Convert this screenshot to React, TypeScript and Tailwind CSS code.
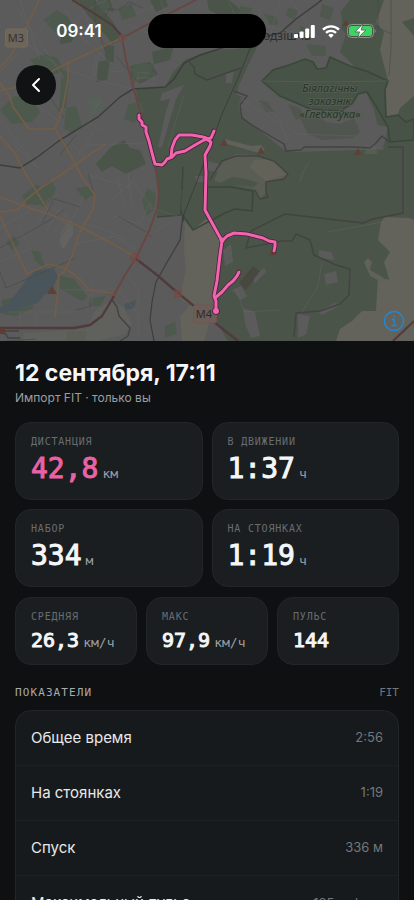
import clsx from 'clsx'

type Stat = {
  label: string
  value: string
  unit?: string
  accent?: boolean
}

const mainStats: Stat[] = [
  { label: 'Дистанция', value: '42,8', unit: 'км', accent: true },
  { label: 'В движении', value: '1:37', unit: 'ч' },
  { label: 'Набор', value: '334', unit: 'м' },
  { label: 'На стоянках', value: '1:19', unit: 'ч' },
]

const smallStats: Stat[] = [
  { label: 'Средняя', value: '26,3', unit: 'км/ч' },
  { label: 'Макс', value: '97,9', unit: 'км/ч' },
  { label: 'Пульс', value: '144' },
]

const metrics = [
  { name: 'Общее время', value: '2:56' },
  { name: 'На стоянках', value: '1:19' },
  { name: 'Спуск', value: '336 м' },
  { name: 'Максимальный пульс', value: '185 уд/мин' },
]

const mono = "font-['DejaVu_Sans_Mono',monospace]"

// track pieces, drawn twice: dark casing first, then the pink line
const track = [
  'M139 115l0 4 3 3 0 3 4 2 0 5 3 9 3 12 3 11 7 1 3-3 2-3 5-2 4-4 9-2 5-3 5-3 9-5 5-1',
  'M171 157l1-9 3-8 4-5 13 0 11 2 6 2',
  'M214 131l-3 7-5 1 5 3-1 4-5 9 1 18-1 37 17 31',
  'M222 241l5-5 7-3 13 1 8 2 8 2 6 3 6 1 0 4-1 5',
  'M222 241l-2 14-3 26-3 15 2 5 0 4 0 6',
  'M215 298l7-6 6-7 5-4 4-5 2-4',
]

function RouteMap() {
  return (
    <svg
      viewBox="0 0 414 341"
      preserveAspectRatio="xMidYMid slice"
      className="block h-full w-full"
      role="img"
      aria-label="Карта маршрута"
    >
      <rect width="414" height="341" fill="#5b5b5b" />

      {/* forests */}
      <g fill="#4a5448">
        <path d="M136 89l29-2 9-16 12-12 30-9 30-2 20-16 4 20-8 18-22 14-4 10 8 4-4 8 4 12 40 32 10 2 66-2 54-1V341H228l-12-20-1-20 7-60-16-22-13 11-12-16-24 3 2-20-5-32-14-50z" />
        <path d="M334 20l16-20h64v150h-30l-10-40-20-44-14-14 6-18z" />
        <path d="M75 0h20l18 22 8 14-8 8-12-14zM98 62l12-2-3 20-10 2zM104 44l10 2 0 16-8 0zM130 66l20-4 8 12-18 10-8-6zM152 52l22-6-4 14-16 4z" />
        <path d="M207 0h22l12 10-6 10-14-4-12-6zM150 0h16l2 6-12 6z" />
        <path d="M110 148l14-8 6 8 10 2 6 14-20 10-14-8-10 6-6-8zM100 0l10 0 4 12-8-2z" />
        <path d="M67 331h20l-2 10H66zM62 28l14 2-4 12-12 2z" />
      </g>
      <g fill="#4e594e">
        <path d="M0 110l14-14 16 2 10 14-8 10-20 2zM22 196l14-12 12 8-2 14-20-2zM43 20l14-10 12 8 6 14-18 2zM30 60l14-6 14 4 6 14-18 4zM62 70l8 2-4 36-7 2zM128 105l12-4 4 10-10 12-10-4zM134 64l20 0-6 14-16 4z" />
        <path d="M66 108l10-2 6 20-10 8-8-6zM2 300l24-6 8 14-18 8-14-2zM58 275l16 4 14 18-6 4-22-12zM90 298l16-2-6 10-12 0zM75 188l14-2 6 8-10 6zM148 188l8 6-2 16-8 6-4-16zM98 0h8l6 8-10 4zM165 326l10-4 2 12-12 4zM6 242l8-6 6 8-8 6zM30 250l10 2 6 18-10-8zM118 8l14-4 4 12-14 4zM34 194l16-14 6 8-4 12-14 4z" />
      </g>

      {/* fields and bare land */}
      <g fill="#63635c">
        <path d="M185 222l8 8 13-11 16 22-6 58-2 8-10 34h-22l-2-24 10-12-10-6 6-32-2-16z" />
        <path d="M384 0h30v18l-12 4 12 14v60l-14 12-4 12-10-2-1-34 3-4-8-30 4-18-8-10z" />
        <path d="M381 222l4-5 25 1 4 2v63l-24-1-6-20 6-10-12-12zM378 278l14 2 22 0v61h-78l4-12 12-8 10-10 14 0z" />
        <path d="M96 310l16-10 12 8 8 16-8 10-24 7H22l2-8 62-4z" fillOpacity=".7" />
        <path d="M59 234l8-12 6 4-4 12-6 2zM366 146l10-4 1 12-12 0z" fillOpacity=".6" />
      </g>

      {/* settlement between the reserve and the southern forest */}
      <path d="M240 8l20-8h78l4 20-2 26-10 12-4 9-9 1-4-7-12-2-20 5-12 7-7 10 18 15 28 12 32 5 20-2 8 12 20 4-4 18-20 2h-60l-14 4-48-34-4-12 8-12-8-6 16-34 10-20z" fill="#5b5b5b" />
      <path d="M300 118l16-4 10 8 14 2 14-6 6 14-6 6-32 2-14-6zM288 104l12 4 6 8-10 4zM258 100l10 2 6 10-8 0z" fill="#4a5448" fillOpacity=".6" />
      <path d="M264 14l12 3 2 8-8 0zM288 8l10 2-4 10-8-4zM240 6l12 2-2 6-10 0zM300 26l12 4-4 8-8-2zM322 4l12 4-4 12-10-4zM306 44l20 2 0 10-14 0z" fill="#4e584c" />
      <path d="M216 176l6-14 14-8 20 1 18 5 14 14-4 5-18 4 0 10-6 6-6-10-40-8z" fill="#5a5d54" />
      <path d="M254 160l16-1 10 8 6 8-20 6-8-6-8-8z" fill="#626258" />
      <path d="M222 182l10-5 14 2 12 4-4 4-30-3z" fill="#4a5448" />
      <g fill="#5b5b5b">
        <path d="M226 73l8-2-2 12-6 0zM184 85l-8 14-14 48-4 0 8-36 4-12-10 2 2-8zM319 250l12 2 4 8-16-2zM324 274l12-3 2 11-12 3zM223 250l8-6 2 18-8 4zM232 290l9-4 6 10-6 4zM243 308l12 4 5 24-9 2-6-14zM298 314l12 2-4 18-8 4zM254 276l10-8 2 4-12 12zM318 311l17-8 6 2-19 10zM195 176l9 0 0 6-8 0zM204 160l16 4 0 8-14-2z" />
        <path d="M225 139l26 7 10-1 4 5-6 3-32-9zM364 262l4-4 4 4-2 8 14 8-2 4-12-6z" fill="#61615b" />
      </g>
      <path d="M239 283l14-17 7 5-14 19z" fill="#494840" />

      {/* water */}
      <path d="M8 304l20-26 8-8 18-1 4 8-6 12-8 6-6 8-14 4-8 4-12 2zM124 304l12-4-2 8-8 2zM0 307l12-4 4 8-16 2z" fill="#4a555b" />
      <path d="M86 102l6-5 10 2 2 8-6 8-10-2z" fill="#566058" />
      <path d="M59 240l10-14 4-2 0 10-10 16z" fill="#646161" />

      {/* reserve */}
      <path
        d="M262 81l11-11 16-5 16-6 8 3 4 7 9-1 4-11 20 9 16 5 22 10-3 9 1 27 12-2 8 7 8-3v21l-24 2-2-15-12-21-9-14-9 2-6 10-12 7-30-2-30-13z"
        fill="#475346"
        stroke="#3a473a"
        strokeWidth="1.6"
      />
      <path d="M262 81l60 1 66-1" fill="none" stroke="#555f53" strokeWidth=".8" />
      <path d="M183 167l-2 46 12 17 32-17 10-4 17 2 1-20-22-4-24 0" fill="none" stroke="#3b473b" strokeWidth="1.5" />

      {/* district and forest borders */}
      <g fill="none" stroke="#444343" strokeWidth="1.4" strokeLinejoin="round">
        <path d="M234 91l13 5-7 9 2 13 10 7 20 12 12 7 2 7 15-1 3-3 50 0 16 1 5-4 7-8 7 6" />
        <path d="M388 147h15l0 66-30 6-10 4-78-9-34 17-5 17 36-7 10 0 4-7 14 6 4 15 22 10 14 4-1 26-9 9-20 7-24 2-2 24" />
        <path d="M210 180l6-10 6-9 14-5 22 0 16 5 14 13-4 5-18 3 0 10 2 5-8 2-5-9" />
        <path d="M189 62l5 5 1 7 12 6 34-12M157 217l24-2M112 300l5 7 2 9 11 12-2 8-8 5M5 331h14M0 333l6 1 2 4 12 0" />
      </g>

      {/* minor streets */}
      <g fill="none" stroke="#696969" strokeWidth=".7" opacity=".6">
        <path d="M0 25l60 42M0 72l50-52M18 10l46 68M80 36l34 30M20 0l20 60M56 40l34-32 16-8M65 10l22 34M78 0l20 44M132 5l26 28 40-10M128 24l30 14M136 14l18-8M160 0l14 30M190 0l-20 24 10 20" />
        <path d="M68 70l30 10 34 9M95 55l-2 22M99 52l-4 24M30 100l30 22M62 132l24 28M0 120l40 50M12 142l26 26M45 150l26-22M95 130l-20 30M85 145l60-2M100 100l-12 22 14 10M110 72l24-2M138 72l16 2 0 10-16 0zM136 78l20 0" />
        <path d="M88 175l40 12 8-12M110 200l24-18 18 26M115 216l24 8 12-22M118 178l6 28M128 172l4 36M40 208l30 18M46 204l24 14M54 200l-18 26M62 206l-16 24M68 212l-16 22M84 195l-22 44M0 228l58-34M0 262l32-14M20 228l14 30M8 312h68M20 312v14M36 312v14M60 290h44M92 284v26M88 312l0-16 24-8M124 272l14 16 0 48M118 290l22 26M76 244l40-8 20 14M82 222l44 16M150 208l28 8M150 236l20-14M340 24h46M240 20l70 16M262 6l-10 40M280 0l-10 36M228 0l14 32M290 0l30 40M240 98l40 26 10 22M252 96l44 38 60 2" />
        <path d="M184 95l-16 52M182 190v20M322 262l-4 24-16 26M236 288l8 24 36-2M328 232l54-10M300 182l3-10 6-10" />
      </g>
      <g fill="none" stroke="#484848" strokeWidth=".8" opacity=".8">
        <path d="M116 56l20 24M40 82l24 36M0 248l50-28 14-10M88 174l6 20M118 216l28 16M0 272l6 16 70-30M6 341l30-2M95 0v20l10 30M60 155l16-20M105 18l4-10 10 2 10-8 14 6M92 306l-16 4M42 223l12-24 26 8M220 14l34 30M378 0v28l14 6M391 0v50l-2 26" />
      </g>

      {/* railways */}
      <g fill="none" stroke="#3c3e3c" strokeWidth="1.5">
        <path d="M0 165l20 3 16-10 24-18 38-23 22-20 13-8 32-2 9-8 10-16 16-8 38-12 42-10 16-14 22-16 15-13" />
        <path d="M251 46l-12 30-17 38-16 44-22 56-1 8" strokeWidth="1" />
        <path d="M183 214l-3 26-14 24-10 18-4 20-2 18 4 21" strokeWidth="1.2" />
      </g>

      {/* city roads */}
      <g fill="none" stroke="#735d46" strokeWidth="1.6" strokeLinejoin="round">
        <path d="M39 0l-12 26-15 28-12 14M0 90l20-3 30-15 18-9 53-25M68 63v16l-5 28-8 22-26 0-16-22-3-10-10-14M0 136l14 16 14 26 20 32M55 129l12 20 15 28 13 18-2 14-14 25-6 20-9 18-5 3-4 42" />
        <path d="M0 197l32 12 16 5 22 8 30 15 34 19M0 212l18-2 8-10 12-10 30-20 22-16 16-10M0 216l14 30 13 28 22-10 16 4 16 12 8 10 24 3" />
      </g>
      <g fill="none" stroke="#6a4441" strokeLinejoin="round">
        <path d="M122 38l30-16 28-14 16-8M122 38l4 22 8 30 8 28 10 40 5 16 2 20-2 15-8 22-13 27-11 17-11 20" strokeWidth="1.8" />
        <path d="M72 0l20 12 20 13 10 11" stroke="#523a3a" strokeWidth="2" />
        <path d="M0 328h74l16-3 12-9 12-20M135 258l22 17 22 19 20 16M214 322l24 19" stroke="#513a3c" strokeWidth="2.4" />
        <path d="M393 341l21-20" stroke="#553b3f" strokeWidth="2.2" />
      </g>
      <g fill="none" stroke="#754a45" strokeWidth="1.3">
        <circle cx="122" cy="38" r="3" />
        <circle cx="135" cy="258" r="4" />
        <path d="M130 258h10M135 253v10M174 290l8 8M182 290l-8 8M147 235l5 1M111 294l6 1M131 81l4 2" />
        <circle cx="178" cy="294" r="3" />
      </g>
      <circle cx="68" cy="63" r="1.6" fill="#735d46" />
      <path d="M0 328h5v6H0z" fill="#5c3d34" />

      {/* peaks */}
      <path d="M224 139l4 7h-8zM261 147l4 7h-8zM358 148l4 7h-8zM346 20l4 6h-8zM52 286l5 8H47zM273 248l4 7h-8z" fill="#5d4135" />

      {/* labels */}
      <g fontFamily="Noto Sans, sans-serif">
        <rect x="5.5" y="29" width="22" height="18" rx="2" fill="#6b655b" stroke="#776a58" />
        <text x="16" y="42" textAnchor="middle" fontSize="11" fill="#35332f">M3</text>
        <rect x="193.5" y="305" width="23" height="18" rx="2" fill="#6b5e58" stroke="#735550" />
        <text x="204" y="318" textAnchor="middle" fontSize="11" fill="#302b29">M4</text>
        <text x="263" y="40" fontSize="12" fill="#2c2c2c">одзішча</text>
        <g textAnchor="middle" fontSize="11" fontStyle="italic" fill="#283428" stroke="#566053" strokeWidth="1.5" paintOrder="stroke">
          <text x="330" y="92">Біялагічны</text>
          <text x="330" y="105">заказнік</text>
          <text x="330" y="118">«Глебкаўка»</text>
        </g>
      </g>

      {/* recorded track */}
      <g fill="none" strokeLinecap="round" strokeLinejoin="round">
        <g stroke="#49203a" strokeWidth="4.6">
          {track.map(d => <path key={d} d={d} />)}
          <circle cx="216" cy="311" r="1.5" />
        </g>
        <g stroke="#f065ad" strokeWidth="3">
          {track.map(d => <path key={d} d={d} />)}
          <circle cx="216" cy="311" r="1.5" fill="#f065ad" />
          <circle cx="222" cy="240" r="1" />
        </g>
      </g>
    </svg>
  )
}

function StatusBar() {
  return (
    <div className="absolute inset-x-0 top-[14px] grid h-[34px] grid-cols-[1fr_118px_1fr] items-center text-white">
      <div className="pl-[10px] text-center text-[17px] leading-6 font-semibold">09:41</div>
      <div className="h-full rounded-full bg-black" />
      <div className="flex items-center justify-center gap-[7px] pr-[10px]">
        <svg width="21" height="13" viewBox="0 0 21 13" fill="currentColor" aria-hidden="true">
          <rect x="0" y="9" width="4" height="4" rx="1" />
          <rect x="5.6" y="6.5" width="4" height="6.5" rx="1" />
          <rect x="11.2" y="3.5" width="4" height="9.5" rx="1" />
          <rect x="16.8" y="0" width="4" height="13" rx="1" />
        </svg>
        <svg width="18" height="13" viewBox="0 0 18 13" fill="none" stroke="currentColor" strokeWidth="2.4" aria-hidden="true">
          <path d="M1 4.7a11.3 11.3 0 0 1 16 0" />
          <path d="M4 7.9a7.1 7.1 0 0 1 10 0" />
          <path d="M9 13l-2.7-2.8a3.8 3.8 0 0 1 5.4 0z" fill="currentColor" stroke="none" />
        </svg>
        <svg width="29" height="14" viewBox="0 0 29 14" aria-hidden="true">
          <rect x=".5" y=".5" width="26" height="13" rx="4" fill="none" stroke="#8b928c" />
          <rect x="2" y="2" width="23" height="10" rx="2.5" fill="#3fd363" />
          <path d="M27.6 5v4c1.2-.4 1.2-3.6 0-4z" fill="#9a9a9a" />
          <path d="M15.8 0L8 7.9h4.5L10.8 14l8-7.9h-4.6z" fill="#fff" stroke="#526056" strokeWidth=".8" />
        </svg>
      </div>
    </div>
  )
}

function StatCard({ stat, small }: { stat: Stat; small?: boolean }) {
  return (
    <div className={clsx('rounded-2xl border border-[#222628] bg-[#1b1e20] px-[15px] pt-3', small ? 'h-[68px]' : 'h-[78px]')}>
      <div className={clsx(mono, 'text-[10px] leading-[14px] tracking-[0.08em] whitespace-nowrap text-[#686d72] uppercase')}>
        {stat.label}
      </div>
      <div className={clsx(mono, 'mt-[3px] flex items-baseline gap-1 whitespace-nowrap')}>
        <span
          className={clsx(
            '[-webkit-text-stroke:1px]',
            small ? 'text-[20px] leading-[26px]' : 'text-[28px] leading-[34px]',
            stat.accent ? 'text-[#ea62a6]' : 'text-[#f5f6f8]'
          )}
        >
          {stat.value}
        </span>
        {stat.unit && <span className="text-[13px] text-[#9a9fa4]">{stat.unit}</span>}
      </div>
    </div>
  )
}

export default function App() {
  return (
    <div className="h-screen overflow-hidden bg-[#0f1011] font-['Inter',sans-serif] text-[#f5f6f8]">
      <div className="relative h-[341px]">
        <RouteMap />
        <StatusBar />
        <button
          type="button"
          aria-label="Назад"
          className="absolute top-[65px] left-[16px] flex size-10 items-center justify-center rounded-full bg-[#101214] text-white"
        >
          <svg width="10" height="16" viewBox="0 0 10 16" fill="none" stroke="currentColor" strokeWidth="2" strokeLinecap="round" strokeLinejoin="round" aria-hidden="true">
            <path d="M8 2L2 8l6 6" />
          </svg>
        </button>
        <button type="button" aria-label="О карте" className="absolute right-[10px] bottom-[10px] size-5 text-[#2486d0]">
          <svg viewBox="0 0 20 20" fill="none" stroke="currentColor" strokeWidth="1.5" className="overflow-visible" aria-hidden="true">
            <circle cx="10" cy="10" r="9.5" />
            <path d="M7.8 8.5h2.4v6M7.4 14.5h5.4" strokeWidth="1.3" />
            <circle cx="10" cy="5.6" r="1" fill="currentColor" stroke="none" />
          </svg>
        </button>
      </div>

      <main className="px-[15px] pt-[18px]">
        <h1 className="text-[23px] leading-7 font-bold">12 сентября, 17:11</h1>
        <p className="mt-[3px] text-[12px] leading-4 text-[#9a9fa4]">Импорт FIT · только вы</p>

        <div className="mt-4 grid grid-cols-2 gap-[9px]">
          {mainStats.map(s => <StatCard key={s.label} stat={s} />)}
        </div>
        <div className="mt-[10px] grid grid-cols-3 gap-[9px]">
          {smallStats.map(s => <StatCard key={s.label} stat={s} small />)}
        </div>

        <section className="mt-5">
          <div className={clsx(mono, 'flex items-center justify-between text-[11px] leading-4')}>
            <h2 className="tracking-widest text-[#a6abb0] uppercase">Показатели</h2>
            <span className="text-[#72777c]">FIT</span>
          </div>
          <dl className="mt-[9px] rounded-2xl border border-[#222628] bg-[#171a1c]">
            {metrics.map(m => (
              <div key={m.name} className="flex h-[55px] items-center justify-between border-b border-[#1c2022] px-[15px] last:border-b-0">
                <dt className="text-[15px] text-[#e8e9eb]">{m.name}</dt>
                <dd className="text-[13px] text-[#73787d]">{m.value}</dd>
              </div>
            ))}
          </dl>
        </section>
      </main>
    </div>
  )
}
